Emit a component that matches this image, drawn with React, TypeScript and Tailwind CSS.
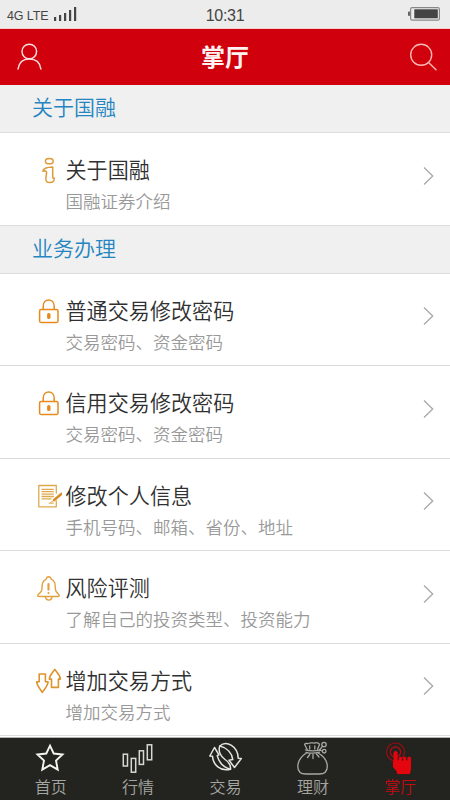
import type { ReactNode } from "react";

type Item = { title: string; desc: string; icon: ReactNode };

const stroke = {
  fill: "none",
  strokeLinecap: "round",
  strokeLinejoin: "round",
} as const;

function InfoIcon() {
  return (
    <svg width="28" height="28" viewBox="0 0 28 28" stroke="#dd9a38" strokeWidth="1.5" {...stroke}>
      <ellipse cx="15.3" cy="4.2" rx="3.9" ry="2.6" />
      <path d="M8.9 14.2C9.3 11.6 11.5 10.3 18.7 10.1V19.2C18.7 21.2 19.1 21.4 20.2 21.1C20.6 23.7 19 25.6 16 25.6C12.7 25.6 11.5 24 11.9 21.2L12.6 15.3C12.5 13.9 10.8 13.5 8.9 14.2Z" />
    </svg>
  );
}

function LockIcon() {
  return (
    <svg width="28" height="28" viewBox="0 0 28 28" stroke="#e58b1e" strokeWidth="1.5" {...stroke}>
      <path d="M9.2 11.5V8.3C9.2 -.1 20.2 -.1 20.2 8.3V11.5" />
      <rect x="5.6" y="11.5" width="18.4" height="13" rx="1.4" />
      <path d="M14.8 16.6V19.4" strokeWidth="3.4" />
    </svg>
  );
}

function NoteIcon() {
  return (
    <svg width="28" height="28" viewBox="0 0 28 28" stroke="#deaa4d" strokeWidth="1.3" {...stroke}>
      <path d="M22.3 10V2.5H4.8V23.8H22.3V18" />
      <path d="M8 6.3H19.3M8 8.7H19.3M8 11.1H19.3M8 13.5H19.3M8 15.9H17" />
      <path d="M20.2 17.1L27.3 10.9" stroke="#d98d23" strokeWidth="2.7" />
      <path d="M16.5 19.7L19 18M15 20.2H19.5" strokeWidth="1" />
    </svg>
  );
}

function BellIcon() {
  return (
    <svg width="28" height="28" viewBox="0 0 28 28" stroke="#e2a141" strokeWidth="1.4" {...stroke}>
      <path d="M12.2 4.1C12.8 .9 16.6 .9 17.2 4.1C21.6 6.2 21.1 9.7 21.4 14.2C21.6 17.7 25.3 18.9 25.3 20.8C25.3 21.6 24.4 21.5 23.6 21.5H5.6C4.6 21.5 3.3 21.5 3.6 20.5C4 18.7 7.9 17.7 8 14.2C8.2 9.7 7.8 6.2 12.2 4.1Z" />
      <path d="M11.4 21.7C11.9 26.2 17.6 26.2 18.1 21.7" />
      <path d="M14.5 9V14.6" strokeWidth="2.2" />
      <path d="M14.5 18V18.1" strokeWidth="2.1" />
    </svg>
  );
}

function ArrowsIcon() {
  return (
    <svg width="28" height="28" viewBox="0 0 28 28" stroke="#df932d" strokeWidth="1.6" {...stroke}>
      <path d="M5.2 6H11.4V13.8H14.1C13.8 18.3 10.6 20.8 8.3 24.4C6.3 20.8 3 18.3 2.7 13.8H5.2Z" />
      <path d="M17.5 19.4V11.1H15.3C15.6 6.9 18.8 4.5 20.8 1.4C22.8 4.5 26.1 6.9 26.4 11.1H24.4V19.4Z" />
    </svg>
  );
}

const ABOUT: Item[] = [{ title: "关于国融", desc: "国融证券介绍", icon: <InfoIcon /> }];

const SERVICES: Item[] = [
  { title: "普通交易修改密码", desc: "交易密码、资金密码", icon: <LockIcon /> },
  { title: "信用交易修改密码", desc: "交易密码、资金密码", icon: <LockIcon /> },
  { title: "修改个人信息", desc: "手机号码、邮箱、省份、地址", icon: <NoteIcon /> },
  { title: "风险评测", desc: "了解自己的投资类型、投资能力", icon: <BellIcon /> },
  { title: "增加交易方式", desc: "增加交易方式", icon: <ArrowsIcon /> },
];

const TABS = [
  {
    label: "首页",
    icon: (
      <svg width="36" height="36" viewBox="0 0 36 36" stroke="#f4f4f0" strokeWidth="1.9" fill="none">
        <path d="M17 6.7L20.7 14.5L29.5 15.5L23 21.5L24.7 30.6L17 26.2L9.3 30.6L11 21.5L4.5 15.5L13.3 14.5Z" />
      </svg>
    ),
  },
  {
    label: "行情",
    icon: (
      <svg width="36" height="36" viewBox="0 0 36 36" stroke="#d8d8d3" strokeWidth="1.5" fill="none">
        <rect x="3.3" y="15.2" width="4.2" height="11.8" />
        <rect x="11.3" y="19.4" width="4.4" height="13.8" />
        <rect x="19.3" y="11.8" width="4.2" height="13.6" />
        <rect x="27.3" y="5.8" width="4.4" height="15" />
      </svg>
    ),
  },
  {
    label: "交易",
    icon: (
      <svg width="36" height="36" viewBox="0 0 36 36" stroke="#e5e5e0" strokeWidth="1.5" {...stroke}>
        <path d="M6.5 8.5L1.8 17L4.5 17.2C4.7 25.5 12.5 33 22.5 30.2C15.5 28.5 11 23.5 9.2 16.6L11 15.8Z" />
        <path d="M11.8 7C18.5 1 30 7.5 30.2 19.2L33.3 19.6L26.5 28.5L21 21.2L24.8 20.6C24 14 19 8.8 11.8 7Z" />
        <path d="M11.8 7C10 12 12.5 17.5 17 20.5C20 22.5 23 26 22.5 30.2" />
      </svg>
    ),
  },
  {
    label: "理财",
    icon: (
      <svg width="36" height="36" viewBox="0 0 36 36" stroke="#a9a9a4" strokeWidth="1.3" {...stroke}>
        <path d="M12 13.5C6 17.5 2.8 22.5 2.8 27.5C2.8 33 6 35 11 35H24C29.5 35 32.3 32.5 32.3 27.5C32.3 21.5 28.5 17 22.5 13.5" />
        <path d="M12.2 10.5L9.5 5.3C11 3.5 12.5 5.2 14 4.3C16 3 18 4.5 20 4C22 3 23.5 4.5 24.6 5.2L22.5 10.5" />
        <path d="M10.5 10.8C15 12.3 19 12.3 25 11.2M11 13.3C15 14.5 20 14.4 24.5 13.2M14.7 7V10M19.8 7V10M14.8 15.5L12.5 18.5M18 15.5V19.5M21.5 15L24 18" />
        <circle cx="29" cy="5.5" r="2.2" />
        <circle cx="29.2" cy="12.2" r="1.8" />
        <path d="M24.5 11L27.4 7.4M25.5 11.4L27.3 12" />
      </svg>
    ),
  },
  {
    label: "掌厅",
    active: true,
    icon: (
      <svg width="36" height="36" viewBox="0 0 36 36" stroke="#e3060f" strokeWidth="1.2" {...stroke}>
        <circle cx="13.5" cy="13" r="9" stroke="#a10b10" />
        <circle cx="13.5" cy="13" r="5.2" stroke="#c00810" />
        <path
          d="M11.6 14.2C11.6 11.4 15.6 11.4 15.6 14.2V22L16.8 21.6V18.8C17.2 17.5 19.5 17.5 19.9 18.8V21.8L21.1 21.4V18.8C21.5 17.5 23.8 17.5 24.2 18.8V21.6L25.4 21.2V18.8C25.8 17.5 28.6 17.5 29 18.8V30L27.8 35H15.3L14.5 32L11 28V23L11.6 22Z"
          fill="#e3060f"
          strokeWidth=".2"
        />
      </svg>
    ),
  },
];

function SectionTitle({ children }: { children: ReactNode }) {
  return (
    <h2 className="flex h-12 items-start border-b border-[#dedede] bg-[#f0f0f0] pl-8 pt-1.5 text-[21px] leading-[30px] text-[#2585c0]">
      {children}
    </h2>
  );
}

function Row({ title, desc, icon }: Item) {
  return (
    <li className="flex h-[92.5px] items-start border-b border-[#dcdcdc] bg-white pl-[34px] pr-4 pt-5">
      <span className="mt-1 h-7 w-7 shrink-0">{icon}</span>
      <div className="ml-[3.5px] flex-1">
        <p className="text-[21.1px] leading-8 text-[#303030]">{title}</p>
        <p className="text-[17.5px] leading-8 text-[#999]">{desc}</p>
      </div>
      <svg className="mt-[12.5px]" width="12" height="20" viewBox="0 0 12 20" fill="none" stroke="#a8a8a8" strokeWidth="1.3">
        <path d="M2 1.5L10.7 10L2 18.5" />
      </svg>
    </li>
  );
}

export default function App() {
  return (
    <div className="flex h-[800px] w-[450px] flex-col overflow-hidden bg-white font-['Noto_Sans_CJK_SC',sans-serif] font-[350]">
      {/* Status bar */}
      <div className="grid h-[29px] shrink-0 grid-cols-3 items-center border-b border-[#f2cfcf] bg-[#ececec] font-['Liberation_Sans',sans-serif] font-normal text-[#444]">
        <div className="flex items-center gap-[5px] pl-[7px] pt-[3px]">
          <span className="text-[12.5px] leading-4 tracking-[-0.1px]">4G LTE</span>
          <svg width="24" height="14" viewBox="0 0 24 14" fill="#444" className="-mt-1">
            <path d="M0 10h2.2v4H0zM5 8h2.2v6H5zM10 6h2.2v8H10zM15 3h2.2v11H15zM20 0h2.2v14H20z" />
          </svg>
        </div>
        <span className="pt-[3px] text-center text-base leading-5 tracking-[-0.3px]">10:31</span>
        <svg className="mr-2.5 justify-self-end" width="32" height="14" viewBox="0 0 32 14" fill="none">
          <rect x="2.6" y=".7" width="28.8" height="12.4" rx="1.6" stroke="#888" strokeWidth="1.2" />
          <rect x="6.3" y="2.3" width="23.5" height="9" fill="#444" />
          <rect x="0" y="4.6" width="2" height="4.2" fill="#666" />
        </svg>
      </div>

      {/* Header */}
      <header className="flex h-14 shrink-0 items-center justify-between bg-[#d0000d] px-3">
        <svg className="ml-1" width="28" height="30" viewBox="0 0 28 30" stroke="#fbdcdc" strokeWidth="1.5" {...stroke}>
          <circle cx="13.3" cy="9.5" r="7.3" />
          <path d="M2 27C3 20 7.5 16.9 13.3 16.9C19.5 16.9 24 20 24.9 27" />
        </svg>
        <h1 className="-mt-[3px] mr-0.5 text-2xl font-bold text-[#fff4f2]">掌厅</h1>
        <svg width="30" height="30" viewBox="0 0 30 30" stroke="#fbb9b5" strokeWidth="1.4" {...stroke}>
          <circle cx="13.2" cy="12.8" r="10.5" />
          <path d="M20.5 20.5L28 27.7" />
        </svg>
      </header>

      {/* Menu */}
      <main className="flex-1 overflow-hidden">
        <SectionTitle>关于国融</SectionTitle>
        <ul>{ABOUT.map((item) => <Row key={item.title} {...item} />)}</ul>
        <SectionTitle>业务办理</SectionTitle>
        <ul>{SERVICES.map((item) => <Row key={item.title} {...item} />)}</ul>
      </main>

      {/* Tab bar */}
      <nav className="flex h-[63px] shrink-0 border-t border-[#b5b5b5] bg-[#23231f] pl-[7px] pr-[6px] pt-px">
        {TABS.map((tab) => (
          <button key={tab.label} className="flex flex-1 flex-col items-center">
            {tab.icon}
            <span className={tab.active ? "text-base leading-[22px] text-[#c00c12]" : "text-base leading-[22px] text-[#a5a5a1]"}>
              {tab.label}
            </span>
          </button>
        ))}
      </nav>
    </div>
  );
}
